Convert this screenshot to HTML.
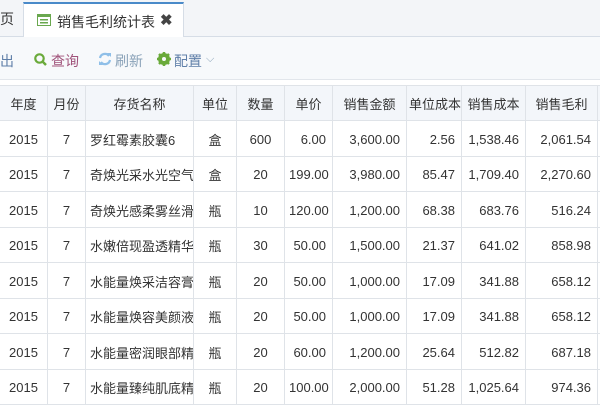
<html><head><style>
body{margin:0;width:600px;height:400px;overflow:hidden;background:#fff;font-family:"Liberation Sans","Noto Sans CJK SC",sans-serif;font-size:13px;color:#333;position:relative}
.tabbar{position:absolute;left:0;top:0;width:600px;height:36px;background:#f3f5f8;border-bottom:1px solid #d6dde6}
.tab{position:absolute;left:23px;top:2px;width:161px;height:35px;background:#fff;border:1px solid #d6dde6;border-top:2px solid #4a8ac9;border-bottom:none;box-sizing:border-box}
.toolbar{position:absolute;left:0;top:37px;width:600px;height:42px;background:#f7f9fb;border-bottom:1px solid #e2e6eb}
.tb{position:absolute;top:14px;font-size:14px}
table{position:absolute;left:-1px;top:85px;border-collapse:collapse;table-layout:fixed;width:618px}
td,th{border:1px solid #dfe3e8;padding:0 6px 0 4px;white-space:nowrap;overflow:hidden;font-weight:normal;font-size:13px}
th{height:35px;background:#f3f6fa;text-align:center;padding:0 2px}
td{height:35.5px;text-align:right;padding-top:2px}
td.c{text-align:center;padding:2px 2px 0}td.l{text-align:left;padding:2px 2px 0 4px}
</style></head><body>
<div class="tabbar">
<span style="position:absolute;left:0;top:9px;font-size:14px">页</span>
<div class="tab">
<svg style="position:absolute;left:13px;top:10px" width="14" height="12"><rect x="0.5" y="0.5" width="13" height="11" fill="#fff" stroke="#6aa84f"/><rect x="0" y="0" width="14" height="3" fill="#6aa84f"/><rect x="3" y="5" width="8" height="1.5" fill="#6aa84f"/><rect x="3" y="8" width="8" height="1.5" fill="#6aa84f"/></svg>
<span style="position:absolute;left:33px;top:8px;font-size:14px">销售毛利统计表</span>
<span style="position:absolute;left:136px;top:7px;font-size:15px;font-weight:bold;color:#444">✖</span>
</div></div>
<div class="toolbar">
<span class="tb" style="left:0;color:#5f7fa8">出</span>
<svg style="position:absolute;left:34px;top:16px" width="13" height="13"><circle cx="5.5" cy="5.5" r="4.2" fill="none" stroke="#6aaa3a" stroke-width="2.2"/><line x1="8.5" y1="8.5" x2="12" y2="12" stroke="#6aaa3a" stroke-width="2.5"/></svg>
<span class="tb" style="left:51px;color:#a0527a">查询</span>
<svg style="position:absolute;left:98px;top:15px" width="14" height="14" viewBox="0 0 14 14"><path d="M2 6 A5 5 0 0 1 11 4" fill="none" stroke="#8fbfe8" stroke-width="2.2"/><path d="M12 8 A5 5 0 0 1 3 10" fill="none" stroke="#8fbfe8" stroke-width="2.2"/><path d="M9 1 L13 1 L13 5Z" fill="#8fbfe8"/><path d="M5 13 L1 13 L1 9Z" fill="#8fbfe8"/></svg>
<span class="tb" style="left:115px;color:#8aa2b8">刷新</span>
<svg style="position:absolute;left:157px;top:15px" width="14" height="14" viewBox="0 0 14 14"><circle cx="7" cy="7" r="4.5" fill="none" stroke="#6aaa3a" stroke-width="3"/><g stroke="#6aaa3a" stroke-width="2.5"><line x1="7" y1="0" x2="7" y2="14"/><line x1="0" y1="7" x2="14" y2="7"/><line x1="2" y1="2" x2="12" y2="12"/><line x1="12" y1="2" x2="2" y2="12"/></g><circle cx="7" cy="7" r="2" fill="#f7f9fb"/></svg>
<span class="tb" style="left:174px;color:#5f7fa8">配置</span>
<span class="tb" style="left:206px;color:#8aa2b8;font-size:11px;top:16px">⌵</span>
</div>
<table>
<colgroup><col style="width:48px"><col style="width:38px"><col style="width:108px"><col style="width:43px"><col style="width:48px"><col style="width:48px"><col style="width:74px"><col style="width:55px"><col style="width:64px"><col style="width:72px"><col style="width:20px"></colgroup>
<tr><th>年度</th><th>月份</th><th>存货名称</th><th>单位</th><th>数量</th><th>单价</th><th>销售金额</th><th>单位成本</th><th>销售成本</th><th>销售毛利</th><th></th></tr>
<tr><td class="c">2015</td><td class="c">7</td><td class="l">罗红霉素胶囊6</td><td class="c">盒</td><td class="c">600</td><td>6.00</td><td>3,600.00</td><td>2.56</td><td>1,538.46</td><td>2,061.54</td><td></td></tr>
<tr><td class="c">2015</td><td class="c">7</td><td class="l">奇焕光采水光空气轻</td><td class="c">盒</td><td class="c">20</td><td>199.00</td><td>3,980.00</td><td>85.47</td><td>1,709.40</td><td>2,270.60</td><td></td></tr>
<tr><td class="c">2015</td><td class="c">7</td><td class="l">奇焕光感柔雾丝滑美</td><td class="c">瓶</td><td class="c">10</td><td>120.00</td><td>1,200.00</td><td>68.38</td><td>683.76</td><td>516.24</td><td></td></tr>
<tr><td class="c">2015</td><td class="c">7</td><td class="l">水嫩倍现盈透精华水</td><td class="c">瓶</td><td class="c">30</td><td>50.00</td><td>1,500.00</td><td>21.37</td><td>641.02</td><td>858.98</td><td></td></tr>
<tr><td class="c">2015</td><td class="c">7</td><td class="l">水能量焕采洁容膏</td><td class="c">瓶</td><td class="c">20</td><td>50.00</td><td>1,000.00</td><td>17.09</td><td>341.88</td><td>658.12</td><td></td></tr>
<tr><td class="c">2015</td><td class="c">7</td><td class="l">水能量焕容美颜液</td><td class="c">瓶</td><td class="c">20</td><td>50.00</td><td>1,000.00</td><td>17.09</td><td>341.88</td><td>658.12</td><td></td></tr>
<tr><td class="c">2015</td><td class="c">7</td><td class="l">水能量密润眼部精华</td><td class="c">瓶</td><td class="c">20</td><td>60.00</td><td>1,200.00</td><td>25.64</td><td>512.82</td><td>687.18</td><td></td></tr>
<tr><td class="c">2015</td><td class="c">7</td><td class="l">水能量臻纯肌底精华</td><td class="c">瓶</td><td class="c">20</td><td>100.00</td><td>2,000.00</td><td>51.28</td><td>1,025.64</td><td>974.36</td><td></td></tr>
</table>
</body></html>
